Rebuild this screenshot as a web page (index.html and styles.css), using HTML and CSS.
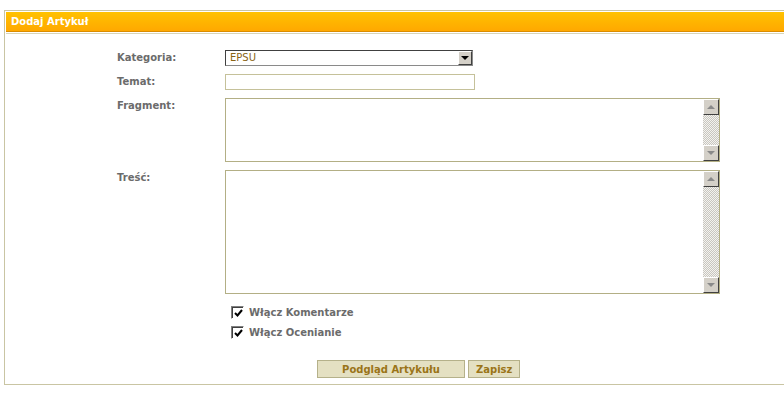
FILE: index.html
```html
<HTML>
	<HEAD>
		<meta http-equiv="content-type" content="text/html; charset=UTF-8">
		<link rel="stylesheet" href="styles.css">
	</HEAD>
	<BODY>
		<div class='panel'>
			<div class='head'>Dodaj Artykuł</div>
			<div class='body'>
				<div class='grid'>
					<label class='lbl'>Kategoria:</label>
					<div class='sel'>
						<span class='sel-val'>EPSU</span>
						<span class='sel-btn'><span class='arr-down'></span></span>
					</div>

					<label class='lbl'>Temat:</label>
					<input class='txt' type='text' />

					<label class='lbl'>Fragment:</label>
					<div class='area small'>
						<textarea></textarea>
						<div class='sbar'>
							<span class='sbtn'><span class='arr-up'></span></span>
							<span class='track'></span>
							<span class='sbtn'><span class='arr-down grey'></span></span>
						</div>
					</div>

					<label class='lbl'>Treść:</label>
					<div class='area big'>
						<textarea></textarea>
						<div class='sbar'>
							<span class='sbtn'><span class='arr-up'></span></span>
							<span class='track'></span>
							<span class='sbtn'><span class='arr-down grey'></span></span>
						</div>
					</div>
				</div>

				<div class='checks'>
					<div class='chk'>
						<span class='box'><svg width='9' height='9' viewBox='0 0 9 9'><path d='M1 4 L3.5 6.5 L8 1' fill='none' stroke='#000' stroke-width='2'/></svg></span>
						Włącz Komentarze
					</div>
					<div class='chk'>
						<span class='box'><svg width='9' height='9' viewBox='0 0 9 9'><path d='M1 4 L3.5 6.5 L8 1' fill='none' stroke='#000' stroke-width='2'/></svg></span>
						Włącz Ocenianie
					</div>
				</div>

				<div class='buttons'>
					<input type='submit' class='btn wide' value='Podgląd Artykułu' />
					<input type='submit' class='btn' value='Zapisz' />
				</div>
			</div>
		</div>
	</BODY>
</HTML>
```

FILE: styles.css
```css
BODY {
	margin		: 0;
	padding		: 10px 0 0 4px;
	background-color: #ffffff;
	font-family	: "DejaVu Sans", Verdana, sans-serif;
	font-size	: 10px;
}
.panel {
	border		: 1px solid #c9c5a3;
	border-right	: none;
	padding		: 1px 0 1px 1px;
}
.head {
	height		: 19px;
	line-height	: 19px;
	padding-left	: 5px;
	color		: #ffffff;
	font-weight	: bold;
	background	: linear-gradient(#ffc200, #ffa800);
	border-bottom	: 1px solid #d98c00;
}
.body {
	margin-top	: 1px;
	border-top	: 1px solid #d8d5b8;
	padding		: 16px 0 5px 111px;
}
.grid {
	display		: grid;
	grid-template-columns: 108px 495px;
	row-gap		: 8px;
	align-items	: start;
}
.lbl {
	color		: #6b6b6b;
	font-weight	: bold;
	padding-top	: 2px;
}
.sel {
	display		: flex;
	width		: 248px;
	height		: 16px;
	box-sizing	: border-box;
	border		: 1px solid #8a8a8a;
	border-top-color: #404040;
	border-left-color: #404040;
	background	: #fff;
}
.sel-val {
	flex		: 1;
	color		: #8a6414;
	padding-left	: 4px;
	line-height	: 14px;
}
.sel-btn {
	width		: 14px;
	display		: flex;
	align-items	: center;
	justify-content	: center;
	background	: #d4d0c8;
	border-left	: 1px solid #fff;
	border-top	: 1px solid #fff;
	border-right	: 1px solid #404040;
	border-bottom	: 1px solid #404040;
	box-sizing	: border-box;
}
.arr-down {
	width		: 0;
	height		: 0;
	border-left	: 4px solid transparent;
	border-right	: 4px solid transparent;
	border-top	: 4px solid #000;
}
.arr-up {
	width		: 0;
	height		: 0;
	border-left	: 4px solid transparent;
	border-right	: 4px solid transparent;
	border-bottom	: 4px solid #8a8a8a;
}
.arr-down.grey { border-top-color: #8a8a8a; }
.txt {
	width		: 250px;
	height		: 16px;
	box-sizing	: border-box;
	border		: 1px solid #c5c19a;
	padding		: 0 3px;
	margin		: 0;
	font-size	: 10px;
}
.area {
	display		: flex;
	width		: 495px;
	box-sizing	: border-box;
	border		: 1px solid #b3af85;
	background	: #fff;
}
.area.small { height: 64px; }
.area.big { height: 124px; }
.area textarea {
	flex		: 1;
	border		: none;
	resize		: none;
	outline		: none;
	margin		: 0;
}
.sbar {
	width		: 16px;
	display		: flex;
	flex-direction	: column;
}
.sbtn {
	height		: 16px;
	display		: flex;
	align-items	: center;
	justify-content	: center;
	background	: #d4d0c8;
	border-left	: 1px solid #fff;
	border-top	: 1px solid #fff;
	border-right	: 1px solid #404040;
	border-bottom	: 1px solid #404040;
	box-sizing	: border-box;
}
.track {
	flex		: 1;
	background	: repeating-conic-gradient(#c8c6c0 0 25%, #f4f3ef 0 50%) 0 0 / 2px 2px;
}
.checks {
	margin		: 12px 0 0 114px;
	display		: flex;
	flex-direction	: column;
	gap		: 7px;
}
.chk {
	display		: flex;
	align-items	: center;
	color		: #6b6b6b;
	font-weight	: bold;
	height		: 13px;
}
.box {
	width		: 13px;
	height		: 13px;
	box-sizing	: border-box;
	border		: 1px solid #fff;
	border-top-color: #808080;
	border-left-color: #808080;
	box-shadow	: inset 1px 1px 0 #404040;
	background	: #fff;
	display		: flex;
	align-items	: center;
	justify-content	: center;
	padding		: 1px 0 0 1px;
	margin-right	: 5px;
}
.buttons {
	margin		: 21px 0 0 200px;
	display		: flex;
	gap		: 3px;
}
.btn {
	height		: 18px;
	margin		: 0;
	padding		: 0 7px;
	background	: #e4e0c2;
	border		: 1px solid #b5b18a;
	color		: #9a7418;
	font-family	: "DejaVu Sans", Verdana, sans-serif;
	font-size	: 10px;
	font-weight	: bold;
}
.btn.wide { width: 148px; }
```
